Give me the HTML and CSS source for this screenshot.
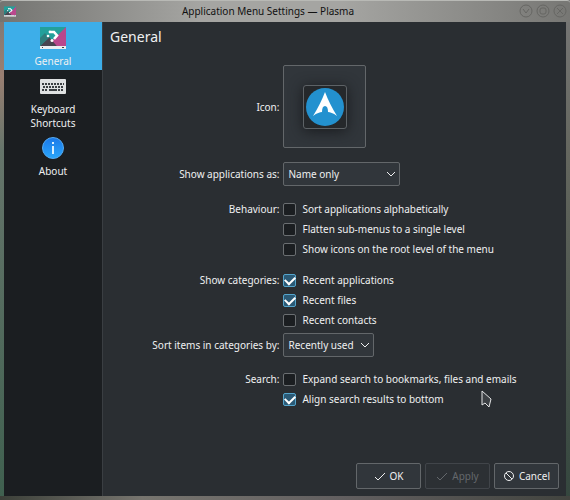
FILE: index.html
```html
<!DOCTYPE html>
<html lang="en-GB">
<head>
<meta charset="utf-8">
<meta name="viewport" content="width=device-width, initial-scale=1">
<title>Application Menu Settings — Plasma</title>
<link rel="stylesheet" href="styles.css">
</head>
<body>
<svg class="defs" aria-hidden="true">
  <defs>
    <linearGradient id="info-fill" x1="0" y1="0" x2="0" y2="1"><stop offset="0" stop-color="#1b78e8"/><stop offset="1" stop-color="#2aa6fb"/></linearGradient>
    <symbol id="plasma" viewBox="0 0 26 22">
      <path fill="#23a09b" d="M0 0h26v19H0z"/>
      <path fill="#b9488d" d="M26 0v19H7z"/>
      <path fill="#4a4550" d="M0 19l9-9 8 9z"/>
      <path fill="#2f7d7c" d="M0 11l5-5 4 5-9 8z"/>
      <path fill="#b9488d" d="M12 13l5 6h9V8z"/>
      <path fill="none" stroke="#fff" stroke-width="2.600" d="M11 5h3l3 3.500-3 3.500"/>
      <circle cx="10" cy="5" r="1.400" fill="#fff"/><circle cx="8" cy="9" r="1.300" fill="#fff"/><circle cx="12" cy="13.500" r="1.500" fill="#fff"/>
      <path fill="#eceef0" d="M0 19h26v3H0z"/>
      <path fill="#444" d="M2 20h1v1H2zM22 20h2v1h-2z"/>
    </symbol>
  </defs>
</svg>
<div class="window">
  <header class="titlebar">
    <svg class="title-icon" aria-hidden="true"><use href="#plasma"/></svg>
    <h1>Application Menu Settings — Plasma</h1>
    <div class="window-buttons">
      <button type="button" aria-label="Minimise"><svg viewBox="0 0 14 14"><circle cx="7" cy="7" r="6"/><path d="M4 5l3 4 3-4"/></svg></button>
      <button type="button" aria-label="Maximise"><svg viewBox="0 0 14 14"><circle cx="7" cy="7" r="6"/><rect x="4" y="4" width="6" height="6" rx="2"/></svg></button>
      <button type="button" aria-label="Close"><svg viewBox="0 0 14 14"><circle cx="7" cy="7" r="6"/><path d="M4 4l6 6M10 4l-6 6"/></svg></button>
    </div>
  </header>
  <div class="body">
    <nav class="sidebar">
      <a class="page current" href="#general" aria-current="page">
        <span class="page-icon"><svg width="26" height="22" aria-hidden="true"><use href="#plasma"/></svg></span>
        <span>General</span>
      </a>
      <a class="page" href="#shortcuts">
        <span class="page-icon"><svg width="26" height="15" viewBox="0 0 26 15" aria-hidden="true">
          <rect width="26" height="15" rx="1" fill="#dfe1e2"/>
          <g fill="none" stroke="#3c4043" stroke-width="2"><path stroke-dasharray="2 1" d="M2 5h22M3 8h21"/><path stroke-dasharray="2 1" d="M2 11h6M18 11h6"/><path d="M9 11h8"/></g>
        </svg></span>
        <span>Keyboard Shortcuts</span>
      </a>
      <a class="page" href="#about">
        <span class="page-icon"><svg width="22" height="22" viewBox="0 0 22 22" aria-hidden="true">
          <circle cx="11" cy="11" r="10.500" fill="url(#info-fill)" stroke="#55aaf0"/>
          <path fill="#d8efff" d="M10 5h2v2h-2zM10 9h2v8h-2z"/>
        </svg></span>
        <span>About</span>
      </a>
    </nav>
    <main class="content" id="general">
      <h2>General</h2>
      <form class="settings">
        <label for="icon">Icon:</label>
        <button type="button" class="icon-button" id="icon" aria-label="Choose icon">
          <span class="icon-frame"><svg width="38" height="38" viewBox="0 0 38 38" aria-hidden="true">
            <circle cx="19" cy="19" r="19" fill="#2391cf"/>
            <path fill="#fff" d="M19 4c-3 8-7 16-12 24 4-3 7-4 9-4 0-4 1-6 3-6s3 2 3 6c2 0 5 1 9 4C26 20 22 12 19 4z"/>
          </svg></span>
        </button>

        <label class="spaced" for="show-as">Show applications as:</label>
        <div class="select wide spaced">
          <select id="show-as"><option>Name only</option></select>
          <svg viewBox="0 0 10 6" aria-hidden="true"><path d="M1 1l4 4 4-4"/></svg>
        </div>

        <span class="group-label behaviour" id="behaviour">Behaviour:</span>
        <div class="checks behaviour" role="group" aria-labelledby="behaviour">
          <label><input type="checkbox">Sort applications alphabetically</label>
          <label><input type="checkbox">Flatten sub-menus to a single level</label>
          <label><input type="checkbox">Show icons on the root level of the menu</label>
        </div>

        <span class="group-label categories" id="categories">Show categories:</span>
        <div class="checks categories" role="group" aria-labelledby="categories">
          <label><input type="checkbox" checked>Recent applications</label>
          <label><input type="checkbox" checked>Recent files</label>
          <label><input type="checkbox">Recent contacts</label>
        </div>

        <label class="close" for="sort-by">Sort items in categories by:</label>
        <div class="select narrow close">
          <select id="sort-by"><option>Recently used</option></select>
          <svg viewBox="0 0 10 6" aria-hidden="true"><path d="M1 1l4 4 4-4"/></svg>
        </div>

        <span class="group-label search" id="search">Search:</span>
        <div class="checks search" role="group" aria-labelledby="search">
          <label><input type="checkbox">Expand search to bookmarks, files and emails</label>
          <label><input type="checkbox" checked>Align search results to bottom</label>
        </div>
      </form>
      <footer class="actions">
        <button type="button"><svg viewBox="0 0 12 12" aria-hidden="true"><path d="M1 7l3 3 7-7"/></svg>OK</button>
        <button type="button" disabled><svg viewBox="0 0 12 12" aria-hidden="true"><path d="M1 7l3 3 7-7"/></svg>Apply</button>
        <button type="button"><svg viewBox="0 0 12 12" aria-hidden="true"><circle cx="6" cy="6" r="4.500"/><path d="M3 3l6 6"/></svg>Cancel</button>
      </footer>
    </main>
  </div>
</div>
<svg class="pointer" viewBox="0 0 12 18" aria-hidden="true"><path d="M2 1v14l3-2 4 4 2-8z"/></svg>
</body>
</html>
```
FILE: styles.css
```css
* { box-sizing: border-box; }

body {
  margin: 0;
  background: #2a2e32;
  color: #eff0f1;
  font: 10px/14px "Noto Sans", sans-serif;
}

button, select, input { font: inherit; color: inherit; margin: 0; }

svg { display: block; }

.defs { position: absolute; width: 0; height: 0; }

.window {
  display: flex;
  flex-direction: column;
  min-height: 100vh;
  padding: 0 4px 4px;
  background:
    linear-gradient(90deg, #3c4039, #77756f 25%, #625f60 60%, #42443f) bottom / 100% 4px no-repeat,
    linear-gradient(#777, #9a7f72 15%, #66756b 30%, #3f604f) left / 4px 100% no-repeat,
    linear-gradient(#777, #65675f 30%, #34463e) right / 4px 100% no-repeat;
}

.titlebar {
  display: grid;
  grid-template-columns: 1fr auto 1fr;
  align-items: center;
  height: 22px;
  margin: 0 -4px;
  padding: 0 3px 1px 4px;
  border-top: 1px solid #b8b9b5;
  border-radius: 3px 3px 0 0;
  background: linear-gradient(90deg, #747471, #a5a5a2 35%, #a5a5a2 60%, #777774);
  color: #111;
}

.titlebar h1 { margin: 0 35px 0 0; font-size: 10px; font-weight: 400; }

.title-icon { width: 12px; height: 11px; }

.window-buttons { display: flex; justify-content: flex-end; gap: 3px; }

.window-buttons button { width: 14px; height: 14px; padding: 0; border: 0; background: none; }

.window-buttons svg { fill: none; stroke: #666663; }

.body { display: flex; flex: 1; }

.sidebar {
  flex: none;
  width: 99px;
  border-right: 1px solid #3a3e42;
  background: #1b1e21;
}

.page {
  display: flex;
  flex-direction: column;
  align-items: center;
  padding: 0 20px 2px;
  color: inherit;
  text-align: center;
  text-decoration: none;
}

.page.current { background: #3daee9; }

.page-icon { display: grid; place-items: center; height: 32px; }

.content {
  display: flex;
  flex: 1;
  flex-direction: column;
  padding: 5px 7px 7px;
}

.content h2 { margin: 0; font-size: 14px; line-height: 20px; font-weight: 400; }

.settings {
  display: grid;
  grid-template-columns: auto auto;
  justify-content: center;
  column-gap: 4px;
  align-items: center;
  margin-top: 18px;
}

.settings > label, .group-label { text-align: right; }

.group-label { align-self: start; line-height: 20px; }

.icon-button {
  display: grid;
  place-items: center;
  width: 83px;
  height: 83px;
  padding: 0;
  border: 1px solid #63676a;
  border-radius: 2px;
  background: #31363b;
}

.icon-frame {
  display: grid;
  place-items: center;
  width: 44px;
  height: 44px;
  border: 1px solid #5d6266;
  border-radius: 3px;
  background: #25282b;
  box-shadow: 0 2px 14px #191b1e;
}

.select { position: relative; }

.select.wide { width: 117px; }

.select.narrow { width: 91px; }

.select select {
  display: block;
  width: 100%;
  height: 24px;
  padding: 0 4px;
  appearance: none;
  border: 1px solid #63676a;
  border-radius: 2px;
  background: #31363b;
}

.select svg {
  position: absolute;
  top: 9px;
  right: 4px;
  width: 10px;
  height: 6px;
  fill: none;
  stroke: #eff0f1;
  pointer-events: none;
}

.checks label { display: flex; align-items: center; gap: 6px; height: 20px; }

.checks input {
  width: 13px;
  height: 13px;
  appearance: none;
  border: 1px solid #6a6e71;
  border-radius: 2px;
  background: #1b1e21;
}

.checks input:checked { display: grid; place-items: center; border-color: #55a5cc; background: #2b5a76; }

.checks input:checked::before {
  content: "";
  width: 8px;
  height: 5px;
  border: solid #fff;
  border-width: 0 0 2px 2px;
  transform: translateY(-1px) rotate(-45deg);
}

.spaced { margin-top: 14px; }

.behaviour { margin-top: 13px; }

.categories { margin-top: 11px; }

.close { margin-top: 3px; }

.search { margin-top: 12px; }

.actions { display: flex; justify-content: flex-end; gap: 4px; margin-top: auto; }

.actions button {
  display: flex;
  align-items: center;
  justify-content: center;
  gap: 4px;
  width: 65px;
  height: 26px;
  padding: 0;
  border: 1px solid #63676a;
  border-radius: 2px;
  background: #31363b;
}

.actions svg { width: 12px; height: 12px; fill: none; stroke: currentColor; }

.actions button:disabled { border-color: #41454a; background: #2c3034; color: #64686c; }

.pointer {
  position: absolute;
  top: 390px;
  left: 480px;
  width: 12px;
  height: 18px;
  fill: #3c4044;
  stroke: #e3e4e5;
  pointer-events: none;
}
```
